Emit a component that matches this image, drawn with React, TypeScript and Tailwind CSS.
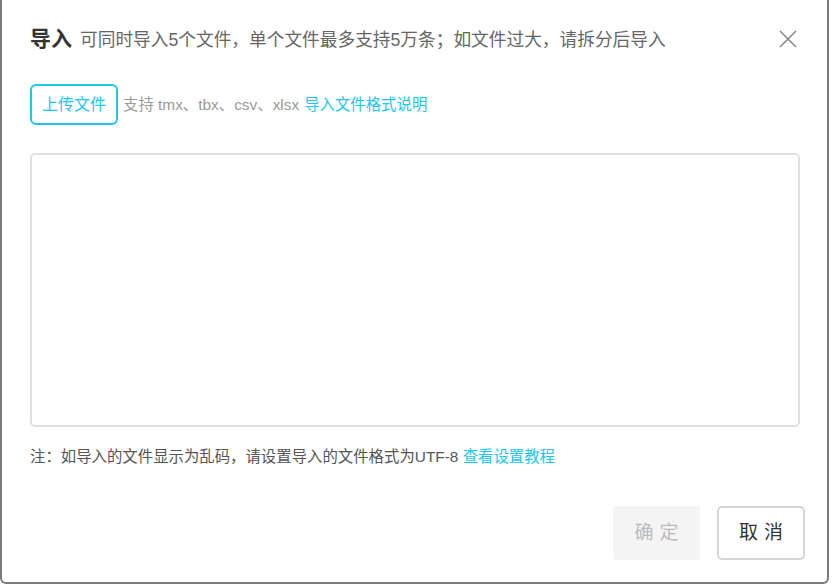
import React from "react";

const font = {
  fontFamily: '"Liberation Sans", "Noto Sans CJK SC", sans-serif',
};

const ImportDialog: React.FC = () => {
  return (
    <div
      className="w-[829px] h-[584px] bg-white border-l-2 border-r-2 border-b-2 border-[#7a7a7a] rounded-b-[6px] flex flex-col px-[28px]"
      style={font}
    >
      {/* header */}
      <div className="flex items-center justify-between pt-[14px] h-[64px]">
        <div className="flex items-baseline">
          <span className="text-[21px] font-bold text-[#333]">导入</span>
          <span className="ml-[8px] text-[17.7px] text-[#666]">
            可同时导入5个文件，单个文件最多支持5万条；如文件过大，请拆分后导入
          </span>
        </div>
        <button className="mr-[2px] text-[#888]">
          <svg width="18" height="18" viewBox="0 0 18 18" fill="none">
            <path
              d="M1 1L17 17M17 1L1 17"
              stroke="#888"
              strokeWidth="1.6"
            />
          </svg>
        </button>
      </div>

      {/* upload row */}
      <div className="flex items-center mt-[20px]">
        <button className="w-[88px] h-[41px] border-2 border-[#1ec6ec] rounded-[6px] text-[16px] text-[#1ec6ec]">
          上传文件
        </button>
        <span className="ml-[5px] text-[15.4px] text-[#9a9a9a]">
          支持 tmx、tbx、csv、xlsx
        </span>
        <a className="ml-[5px] text-[15.4px] text-[#1ec6ec] cursor-pointer">
          导入文件格式说明
        </a>
      </div>

      {/* drop area */}
      <div className="mt-[28px] w-[770px] h-[274px] border-2 border-[#e0e0e0] rounded-[5px]" />

      {/* note */}
      <div className="mt-[18px] text-[15.4px] text-[#555]">
        注：如导入的文件显示为乱码，请设置导入的文件格式为UTF-8{" "}
        <a className="text-[#1ec6ec] cursor-pointer">查看设置教程</a>
      </div>

      {/* footer */}
      <div className="flex justify-end gap-[17px] mt-[38px] mr-[-6px]">
        <button className="w-[87px] h-[54px] bg-[#f4f4f4] rounded-[4px] text-[19px] tracking-[6px] text-[#bbb] pl-[6px]">
          确定
        </button>
        <button className="w-[88px] h-[54px] border-2 border-[#d5d5d5] rounded-[5px] text-[19px] tracking-[6px] text-[#333] pl-[6px]">
          取消
        </button>
      </div>
    </div>
  );
};

export default function App() {
  return (
    <div className="w-[834px] h-[587px] bg-white overflow-hidden">
      <ImportDialog />
    </div>
  );
}
